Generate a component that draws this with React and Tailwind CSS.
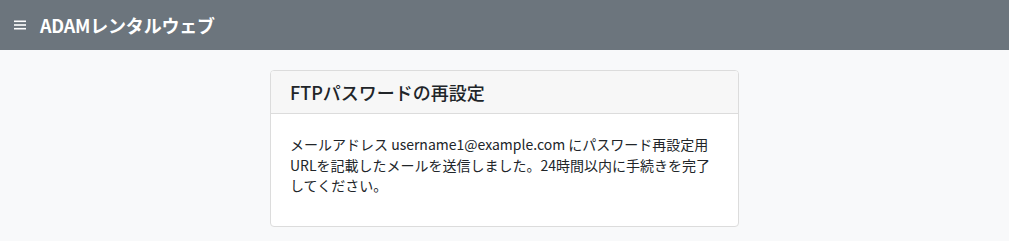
import React from "react";

const font = { fontFamily: '"Noto Sans CJK JP", "Noto Sans", sans-serif' };

const App = () => {
  return (
    <div className="min-h-[241px] bg-[#f8f9fa] text-[#212529]" style={font}>
      <header className="h-[50px] bg-[#6c757d] flex items-center px-[14px] gap-[14px]">
        <svg width="12" height="10" viewBox="0 0 12 10" className="text-white">
          <rect x="0" y="0.5" width="12" height="1.6" fill="currentColor" />
          <rect x="0" y="4.2" width="12" height="1.6" fill="currentColor" />
          <rect x="0" y="7.9" width="12" height="1.6" fill="currentColor" />
        </svg>
        <h1 className="text-white font-bold text-[18px] tracking-[-0.2px]">ADAMレンタルウェブ</h1>
      </header>

      <main className="flex justify-center pt-[20px] pb-[15px]">
        <div className="w-[469px] bg-white border border-[#dcdcdc] rounded-[4px] overflow-hidden">
          <div className="h-[43px] bg-[#f7f7f7] border-b border-[#dcdcdc] flex items-center px-[19px]">
            <h2 className="text-[18px] font-medium text-[#212529]">FTPパスワードの再設定</h2>
          </div>
          <div className="h-[112px] px-[19px] pt-[20px]">
            <p className="text-[14px] leading-[20.5px]">
              メールアドレス username1@example.com にパスワード再設定用URLを記載したメールを送信しました。24時間以内に手続きを完了してください。
            </p>
          </div>
        </div>
      </main>
    </div>
  );
};

export default App;
